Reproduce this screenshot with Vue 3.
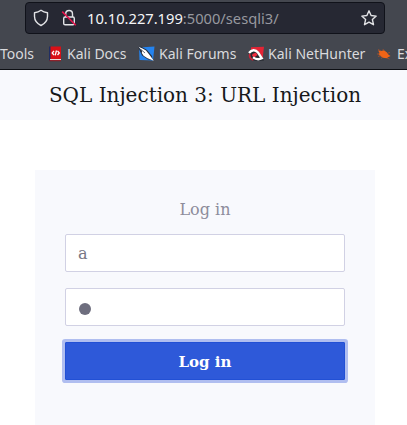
<script setup>
import { ref } from 'vue'

const username = ref('a')
const password = ref('a')
</script>

<template>
  <div class="window">
    <div class="chrome">
      <div class="urlbar">
        <svg class="shield" width="16" height="18" viewBox="0 0 16 18">
          <path d="M8 1.3C6.2 2.7 3.8 3.5 1.5 3.7V7.6C1.6 11.6 4.2 14.8 8 16.5C11.8 14.8 14.4 11.6 14.5 7.6V3.7C12.2 3.5 9.8 2.7 8 1.3Z" />
        </svg>
        <svg class="lock" width="16" height="18" viewBox="0 0 16 18">
          <rect x="2.7" y="8" width="10.6" height="7.8" rx="1.4" />
          <path d="M4.7 8V4.9a3.4 3.4 0 0 1 6.8 0V8" />
          <path class="slash" d="M1.2 2.6L14.8 16.2" />
        </svg>
        <span class="address"><b>10.10.227.199</b>:5000/sesqli3/</span>
        <svg class="star" width="18" height="18" viewBox="0 0 18 18">
          <path d="M9 1.8L11.1 6.5L16.2 7.1L12.4 10.6L13.5 15.7L9 13.1L4.5 15.7L5.6 10.6L1.8 7.1L6.9 6.5Z" />
        </svg>
      </div>
      <nav class="bookmarks">
        <span class="label tools">Tools</span>
        <svg class="icon docs" width="16" height="16" viewBox="0 0 16 16">
          <path fill="#202e63" d="M1 .5h2v14H1z" />
          <path fill="#d91016" d="M2.5 0.5H13V13H2.5z" />
          <path fill="#e8dcdc" d="M2 13h11v1.3H2z" />
          <path fill="#941018" d="M1.5 14.2H13v1H1.5z" />
          <path fill="none" stroke="#fff" stroke-width="1.3" d="M6 4.9L4.2 7L6 9M9.5 4.9L11.3 7L9.5 9M8.5 4.5L7.2 9.4" />
        </svg>
        <span class="label docs-label">Kali Docs</span>
        <svg class="icon forums" width="17" height="16" viewBox="0 0 17 16">
          <path fill="#2483ee" d="M1 1.5L16.5 .5L15 14.5L1.5 14Z" />
          <path fill="#26303f" d="M0 1L3 .5L9 4L14 10L14.5 14L10 13.5L4 9.5Z" />
          <path fill="#fff" d="M.5 .8L4.5 2.6L8 4.6L11.6 9L15.8 14.8L9.5 12.2L5.6 9.8L3.8 7L4.2 5Z" />
          <path stroke="#293345" stroke-width=".7" d="M3 3.5L7 7" />
        </svg>
        <span class="label forums-label">Kali Forums</span>
        <svg class="icon hunter" width="17" height="16" viewBox="0 0 17 16">
          <path fill="#e32435" d="M3 1.2L16 .8L14.6 12.5L10 8L3 5Z" />
          <path fill="#252930" d="M0 6L6 3L11 6L16 14.5L9 15L3 14Z" />
          <path fill="#ef2d3f" d="M4.5 8L8 6.6L9.5 9L6.5 11.2L4 10Z" />
          <path fill="none" stroke="#fff" stroke-width="2.3" d="M1 7C3.5 3.5 7.5 3.3 10 6.5L13.8 12.3C11 13.8 7.5 13.2 5 11.4" />
          <path fill="none" stroke="#c92539" stroke-width="1.8" d="M1.8 8C1.2 11 2.2 13 5.4 14" />
        </svg>
        <span class="label hunter-label">Kali NetHunter</span>
        <svg class="icon exploit" width="16" height="14" viewBox="0 0 16 14">
          <path fill="#f06416" d="M2 3.5L5 4L8 3.2L11 5.4L12.3 7.4L14.5 9L12.5 10L10.7 11.2L7 10.8L4 8.8L2.6 7.3L3.4 5.5Z" />
          <path fill="none" stroke="#b65325" stroke-width=".7" d="M2 2.5L5 4M7 2L7.5 3.4M1 7L4 6.8M2 9.5L5 8.6M5 11.5L7 10M11 11L13.5 12M12 6L14 5.5" />
        </svg>
        <span class="label exploit-label">Exploit-DB</span>
      </nav>
    </div>
    <header class="header">
      <h1>SQL Injection 3: URL Injection</h1>
    </header>
    <main class="content">
      <form class="card" @submit.prevent>
        <h2>Log in</h2>
        <input v-model="username" class="field" type="text" />
        <div class="field secret"><span v-for="(c, i) in password" :key="i" class="dot"></span></div>
        <button class="submit" type="submit">Log in</button>
      </form>
    </main>
  </div>
</template>

<style>
body {
  background: #fff;
  overflow: hidden;
}
</style>

<style scoped>
.window {
  width: 407px;
  height: 425px;
  overflow: hidden;
  font-family: "DejaVu Serif", serif;
}
.chrome {
  box-sizing: border-box;
  height: 70px;
  padding-top: 2px;
  background: #44474f;
  border-bottom: 1px solid #0d0f14;
  font-family: "Noto Sans", sans-serif;
}
.urlbar {
  box-sizing: border-box;
  display: flex;
  align-items: center;
  width: 360px;
  height: 32px;
  margin-left: 25px;
  padding: 0 6px 0 7px;
  border: 1px solid #10121a;
  border-radius: 4px;
  background: #262833;
}
.urlbar svg {
  flex: none;
  fill: none;
  stroke: #e2e3e6;
  stroke-width: 1.4;
  stroke-linejoin: round;
}
.lock {
  margin-left: 12px;
}
.urlbar .slash {
  stroke: #e2144c;
  stroke-width: 1.6;
}
.address {
  margin-left: 10px;
  font-size: 14.7px;
  line-height: 20px;
  color: #97989f;
  white-space: nowrap;
}
.address b {
  font-weight: 400;
  color: #f5f5f7;
}
.star {
  margin-left: auto;
}
.bookmarks {
  display: flex;
  align-items: center;
  height: 35px;
  padding-top: 2px;
  box-sizing: content-box;
  color: #d9dadd;
  font-size: 14px;
  white-space: nowrap;
}
.icon {
  flex: none;
}
.label {
  flex: none;
}
.tools {
  width: 48px;
}
.docs-label {
  width: 71px;
  margin-left: 3px;
}
.forums-label {
  width: 89px;
  margin-left: 4px;
}
.hunter-label {
  width: 108px;
  margin-left: 3px;
}
.exploit-label {
  margin-left: 5px;
}
.header {
  display: flex;
  justify-content: center;
  align-items: center;
  width: 410px;
  height: 50px;
  background: #f8f9fd;
}
h1 {
  margin: 0;
  font-size: 20px;
  font-weight: 400;
  line-height: 30px;
  color: #16181a;
  white-space: nowrap;
}
.content {
  padding: 50px 0 0 35px;
}
.card {
  box-sizing: border-box;
  display: flex;
  flex-direction: column;
  width: 340px;
  height: 270px;
  padding: 28px 30px 0;
  background: #f8f9fd;
}
h2 {
  margin: 0 0 12px;
  font-size: 16px;
  font-weight: 400;
  line-height: 24px;
  text-align: center;
  color: #8d8c9b;
}
.field {
  box-sizing: border-box;
  flex: none;
  width: 280px;
  height: 38px;
  margin: 0 0 16px;
  padding: 0 12px;
  border: 1px solid #d1d1e4;
  border-radius: 2px;
  outline: 0;
  background: #fff;
  color: #777785;
  font: 16px "DejaVu Serif", serif;
}
.secret {
  display: flex;
  align-items: center;
  padding: 3px 13px 0;
}
.dot {
  width: 12px;
  height: 12px;
  border-radius: 50%;
  background: #6e6e7e;
}
.submit {
  box-sizing: border-box;
  height: 38px;
  padding: 2px 0 0;
  border: 1px solid #2250d5;
  border-radius: 1px;
  background: #2e59d9;
  box-shadow: 0 0 0 3px #b0bef0;
  color: #fff;
  font: bold 15px "DejaVu Serif", serif;
}
</style>
